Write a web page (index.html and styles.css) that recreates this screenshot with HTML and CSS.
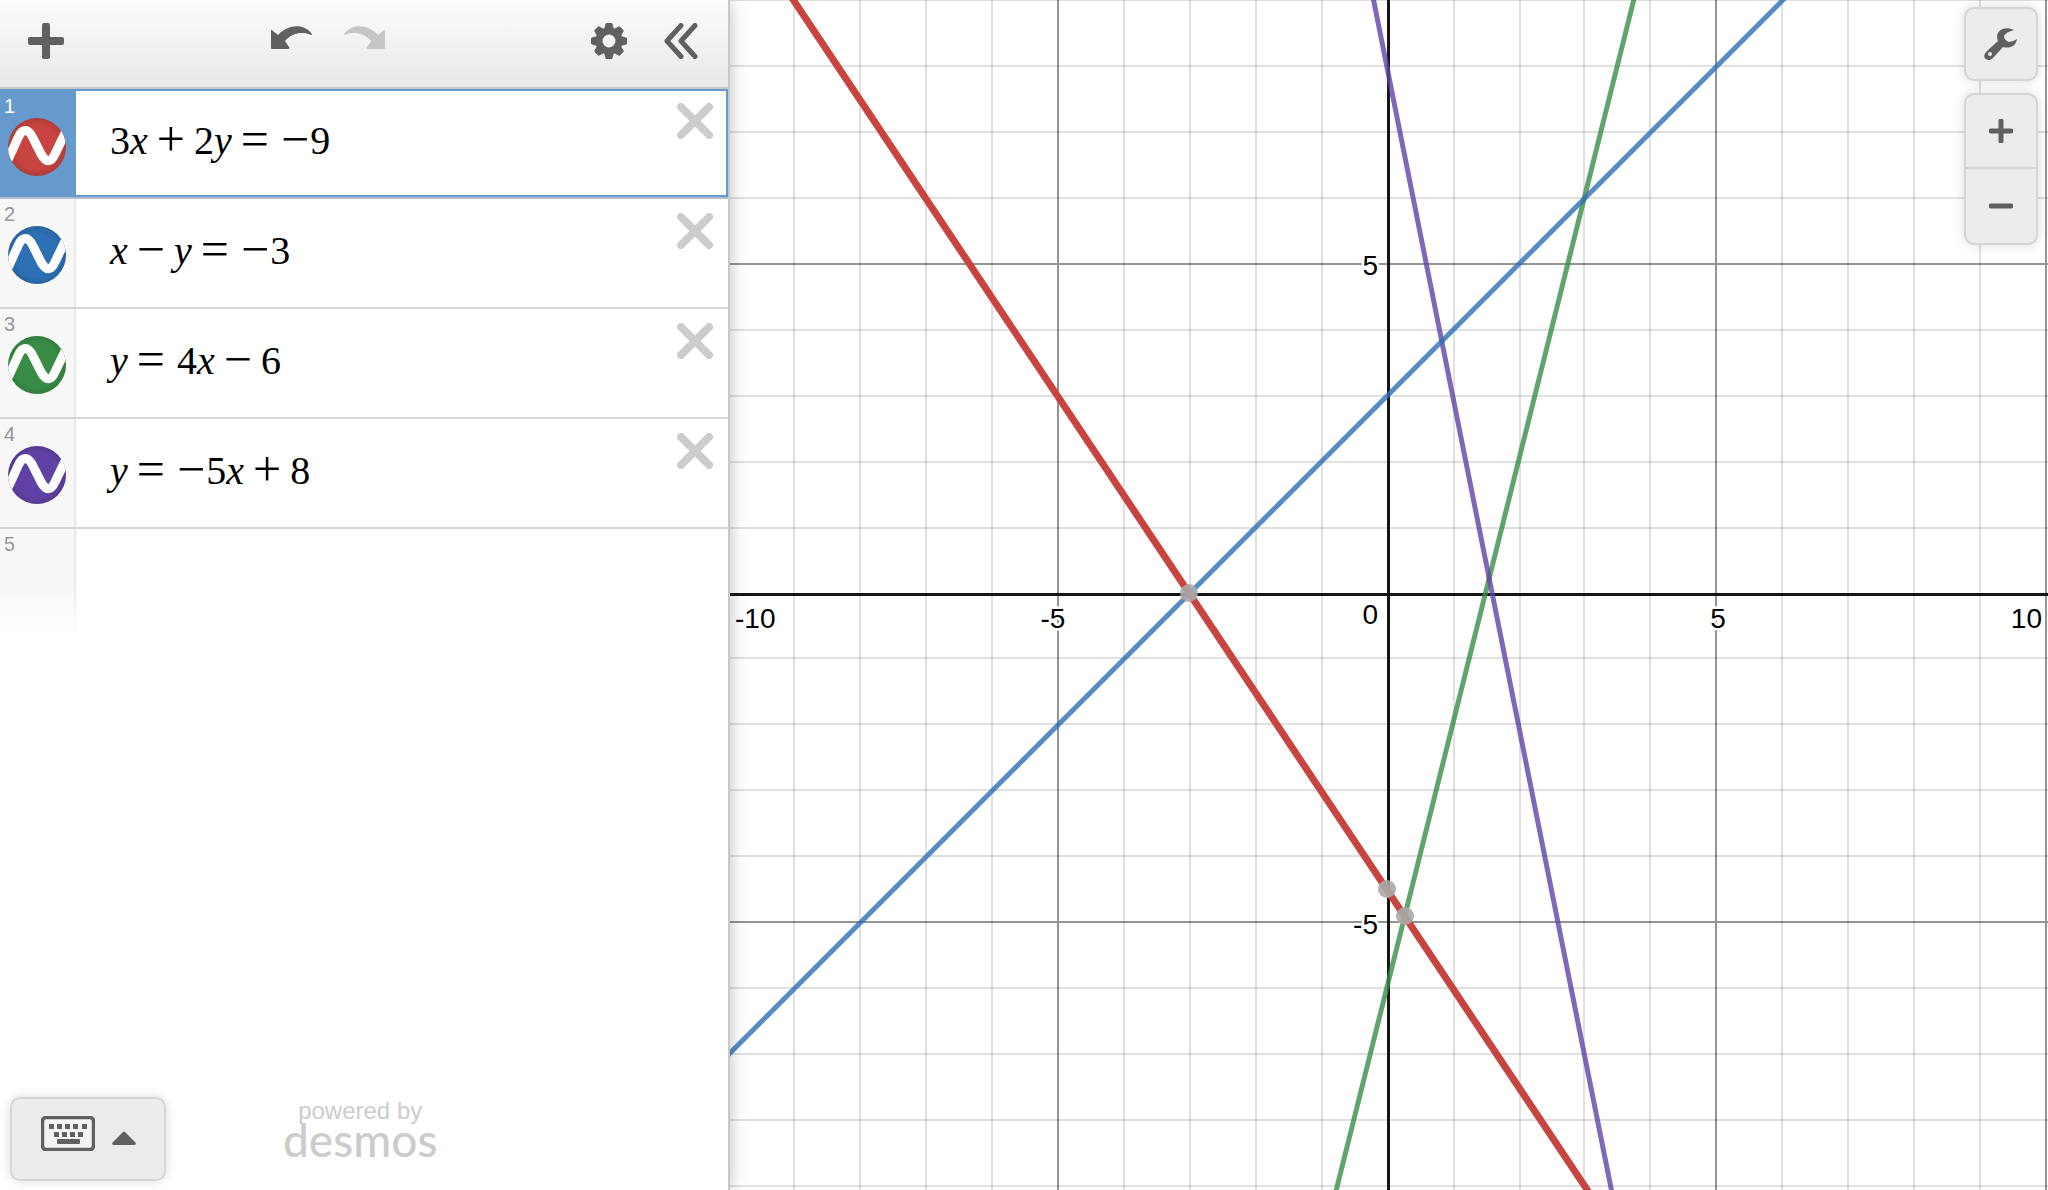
FILE: index.html
```html
<!DOCTYPE html>
<html lang="en">
<head>
<meta charset="utf-8">
<title>Desmos | Graphing Calculator</title>
<link rel="stylesheet" href="styles.css">
</head>
<body>
<svg class="defs" aria-hidden="true">
  <defs>
    <radialGradient id="shade">
      <stop offset="0.75" stop-color="#000" stop-opacity="0"/>
      <stop offset="1" stop-color="#000" stop-opacity="0.12"/>
    </radialGradient>
    <clipPath id="disc"><circle cx="29" cy="29" r="29"/></clipPath>
    <symbol id="curve" viewBox="0 0 58 58">
      <circle cx="29" cy="29" r="29" fill="currentColor"/>
      <circle cx="29" cy="29" r="29" fill="url(#shade)"/>
      <path clip-path="url(#disc)" d="M-2 46 L10 20 C14 10 20 10 25 20 L33 36 C38 45 43 45 47 36 L60 9" fill="none" stroke="#fff" stroke-width="9"/>
    </symbol>
    <symbol id="cross" viewBox="0 0 36 36">
      <path d="M4 4 L32 32 M32 4 L4 32" stroke="currentColor" stroke-width="8" stroke-linecap="round"/>
    </symbol>
    <symbol id="undo-arrow" viewBox="0 0 42 24">
      <path d="M0 4 Q1 4 2 5 L7 9 C17 -2 33 -3 41 8 Q41 9 40 9 C31 5 21 7 14 15 L18 21 Q19 23 17 23 L1 23 Q0 23 0 22 Z" fill="currentColor"/>
    </symbol>
  </defs>
</svg>

<main class="calculator">
  <section class="panel" aria-label="Expressions">
    <header class="toolbar">
      <button class="tool" aria-label="Add item">
        <svg width="36" height="36" viewBox="0 0 36 36"><path d="M14 2 Q14 0 16 0 H20 Q22 0 22 2 V14 H34 Q36 14 36 16 V20 Q36 22 34 22 H22 V34 Q22 36 20 36 H16 Q14 36 14 34 V22 H2 Q0 22 0 20 V16 Q0 14 2 14 H14 Z" fill="currentColor"/></svg>
      </button>
      <div class="history">
        <button class="tool" aria-label="Undo"><svg width="42" height="24"><use href="#undo-arrow"/></svg></button>
        <button class="tool redo" aria-label="Redo" disabled><svg width="42" height="24"><use href="#undo-arrow"/></svg></button>
      </div>
      <div class="options">
        <button class="tool" aria-label="Edit list">
          <svg width="36" height="36" viewBox="-18 -18 36 36">
            <g fill="currentColor">
              <path fill-rule="evenodd" d="M0 -13.500 A13.500 13.500 0 1 1 0 13.500 A13.500 13.500 0 1 1 0 -13.500 Z M0 -6.500 A6.500 6.500 0 1 0 0 6.500 A6.500 6.500 0 1 0 0 -6.500 Z"/>
              <path id="tooth" d="M-5 -11.500 L-3.500 -17 Q-3.300 -18 -2.300 -18 H2.300 Q3.300 -18 3.500 -17 L5 -11.500 Z"/>
              <use href="#tooth" transform="rotate(45)"/>
              <use href="#tooth" transform="rotate(90)"/>
              <use href="#tooth" transform="rotate(135)"/>
              <use href="#tooth" transform="rotate(180)"/>
              <use href="#tooth" transform="rotate(225)"/>
              <use href="#tooth" transform="rotate(270)"/>
              <use href="#tooth" transform="rotate(315)"/>
            </g>
          </svg>
        </button>
        <button class="tool" aria-label="Hide expression list">
          <svg width="34" height="36" viewBox="0 0 34 36"><path d="M17 2.500 L3 18 L17 33.500 M31 2.500 L17 18 L31 33.500" fill="none" stroke="currentColor" stroke-width="5" stroke-linecap="round" stroke-linejoin="round"/></svg>
        </button>
      </div>
    </header>

    <ol class="list">
      <li class="row selected">
        <div class="tab"><span class="index">1</span>
          <button class="swatch red" aria-label="Hide expression 1"><svg width="58" height="58"><use href="#curve"/></svg></button></div>
        <div class="math" role="textbox" contenteditable="true" aria-label="Expression 1" spellcheck="false">3<i>x</i><span class="op">+</span>2<i>y</i><span class="op eq">=</span><span class="neg">−</span>9</div>
        <button class="delete" aria-label="Delete expression 1"><svg width="36" height="36"><use href="#cross"/></svg></button>
      </li>
      <li class="row">
        <div class="tab"><span class="index">2</span>
          <button class="swatch blue" aria-label="Hide expression 2"><svg width="58" height="58"><use href="#curve"/></svg></button></div>
        <div class="math" role="textbox" contenteditable="true" aria-label="Expression 2" spellcheck="false"><i>x</i><span class="op">−</span><i>y</i><span class="op eq">=</span><span class="neg">−</span>3</div>
        <button class="delete" aria-label="Delete expression 2"><svg width="36" height="36"><use href="#cross"/></svg></button>
      </li>
      <li class="row">
        <div class="tab"><span class="index">3</span>
          <button class="swatch green" aria-label="Hide expression 3"><svg width="58" height="58"><use href="#curve"/></svg></button></div>
        <div class="math" role="textbox" contenteditable="true" aria-label="Expression 3" spellcheck="false"><i>y</i><span class="op eq">=</span>4<i>x</i><span class="op">−</span>6</div>
        <button class="delete" aria-label="Delete expression 3"><svg width="36" height="36"><use href="#cross"/></svg></button>
      </li>
      <li class="row">
        <div class="tab"><span class="index">4</span>
          <button class="swatch purple" aria-label="Hide expression 4"><svg width="58" height="58"><use href="#curve"/></svg></button></div>
        <div class="math" role="textbox" contenteditable="true" aria-label="Expression 4" spellcheck="false"><i>y</i><span class="op eq">=</span><span class="neg">−</span>5<i>x</i><span class="op">+</span>8</div>
        <button class="delete" aria-label="Delete expression 4"><svg width="36" height="36"><use href="#cross"/></svg></button>
      </li>
      <li class="row next">
        <div class="tab"><span class="index">5</span></div>
      </li>
    </ol>

    <footer class="footer">
      <button class="keypad" aria-label="Show keypad">
        <svg width="54" height="35" viewBox="0 0 54 35">
          <rect x="1.500" y="1.500" width="51" height="32" rx="3.500" fill="#f4f4f4" stroke="currentColor" stroke-width="3.500"/>
          <path d="M8 10.500 h5 m3 0 h5 m3 0 h5 m3 0 h5 m4 0 h5 M13 18.500 h5 m3 0 h5 m3 0 h5 m3 0 h5" stroke="currentColor" stroke-width="5"/>
          <rect x="16" y="23" width="23" height="5" rx="1" fill="currentColor"/>
        </svg>
        <svg width="24" height="14" viewBox="0 0 24 14"><path d="M11 1 Q12 0 13 1 L23 11 Q25 14 22 14 H2 Q-1 14 1 11 Z" fill="currentColor"/></svg>
      </button>
      <a class="brand" href="#"><span>powered by</span><strong>desmos</strong></a>
    </footer>
  </section>

  <section class="graph" aria-label="Graph">
    <svg class="paper" viewBox="-658 -594 1318 1190" preserveAspectRatio="xMidYMid slice">
      <path class="minor" d="M-594 -600V600M-528 -600V600M-462 -600V600M-396 -600V600M-264 -600V600M-198 -600V600M-132 -600V600M-66 -600V600M66 -600V600M132 -600V600M196 -600V600M262 -600V600M394 -600V600M460 -600V600M526 -600V600M592 -600V600"/>
      <path class="minor" d="M-658 -594H660M-658 -528H660M-658 -462H660M-658 -396H660M-658 -264H660M-658 -198H660M-658 -132H660M-658 -66H660M-658 64H660M-658 130H660M-658 196H660M-658 262H660M-658 394H660M-658 460H660M-658 526H660M-658 592H660"/>
      <path class="major" d="M-330 -600V600M328 -600V600M658 -600V600M-658 -330H660M-658 328H660"/>
      <path class="axis" d="M-658 0H660M0 -600V600"/>
      <g class="labels">
        <text x="-653" y="34">-10</text>
        <text class="mid" x="-335" y="34">-5</text>
        <text class="mid" x="330" y="34">5</text>
        <text class="end" x="654" y="34">10</text>
        <text class="end" x="-10" y="30">0</text>
        <text class="end" x="-10" y="-319">5</text>
        <text class="end" x="-10" y="340">-5</text>
      </g>
      <g class="plots" transform="translate(-1 -1)">
        <path class="plot green" d="M-66 658L263 -658"/>
        <path class="plot purple" d="M-66 -856L263 790"/>
        <path class="plot blue" d="M-724 527L527 -724"/>
        <path class="plot red current" d="M-659 -691L263 691"/>
        <g class="points">
          <circle cx="-198" cy="0" r="9"/>
          <circle cx="0" cy="296" r="9"/>
          <circle cx="18" cy="323" r="9"/>
        </g>
      </g>
    </svg>
    <div class="controls">
      <button class="control" aria-label="Graph settings">
        <svg width="34" height="34" viewBox="0 0 34 34">
          <path fill="currentColor" fill-rule="evenodd" d="M30 3 C22 -1 14 2 13 9 Q13 12 14 14 L3 24 C-1 28 0 31 2 32 C4 34 7 33 9 31 L19 20 C26 22 32 19 33 12 Q29 15 25 15 Q20 13 20 9 Q22 5 30 3 Z M6 25 A2 2 0 1 0 6 29 A2 2 0 1 0 6 25 Z"/>
        </svg>
      </button>
      <div class="zoom">
        <button aria-label="Zoom in"><svg width="24" height="24" viewBox="0 0 24 24"><path d="M2 12H22M12 2V22" stroke="currentColor" stroke-width="5" stroke-linecap="round"/></svg></button>
        <button aria-label="Zoom out"><svg width="24" height="24" viewBox="0 0 24 24"><path d="M2 12H22" stroke="currentColor" stroke-width="5" stroke-linecap="round"/></svg></button>
      </div>
    </div>
  </section>
</main>
</body>
</html>
```
FILE: styles.css
```css
* { box-sizing: border-box; }

body {
  margin: 0;
  font-family: "Liberation Sans", Arial, sans-serif;
  background: #fff;
}

button {
  margin: 0;
  padding: 0;
  border: 0;
  background: none;
  color: #606060;
  font: inherit;
}

svg { display: block; }

.defs { position: absolute; width: 0; height: 0; }

.calculator {
  display: flex;
  height: 100vh;
  overflow: hidden;
}

/* Expression panel */
.panel {
  z-index: 1;
  display: flex;
  flex: 0 0 730px;
  flex-direction: column;
  border-right: 2px solid #c8c8c8;
  background: #fff;
  box-shadow: 0 0 16px rgba(0, 0, 0, 0.25);
}

.toolbar {
  display: flex;
  align-items: center;
  justify-content: space-between;
  height: 89px;
  padding: 0 30px 5px 28px;
  border-bottom: 2px solid #c8c8c8;
  background: linear-gradient(#fcfcfc, #e8e8e8);
}

.history { display: flex; gap: 30px; padding-bottom: 6px; }
.options { display: flex; gap: 37px; }
.redo { color: #c6c6c6; transform: scaleX(-1); }

.list {
  flex: 1;
  margin: 0;
  padding: 0;
  list-style: none;
}

.row {
  display: flex;
  height: 110px;
  border-bottom: 2px solid #d6d6d6;
}

.tab {
  flex: 0 0 76px;
  padding: 4px 0 0 8px;
  border-right: 2px solid #e6e6e6;
  background: #f7f7f7;
}

.index {
  display: block;
  height: 23px;
  margin-left: -4px;
  color: #969696;
  font-size: 20px;
  line-height: 22px;
}

.swatch { display: block; border-radius: 50%; }
.red { color: #c74440; }
.blue { color: #2d70b3; }
.green { color: #388c46; }
.purple { color: #6042a6; }

.math {
  flex: 1;
  padding: 26px 0 0 34px;
  outline: 0;
  color: #000;
  font-family: "Liberation Serif", "Times New Roman", serif;
  font-size: 40px;
  line-height: 52px;
  white-space: nowrap;
}

.op, .neg {
  font-size: 50px;
  line-height: 0;
  vertical-align: -2px;
}
.op { margin: 0 9px; }
.eq { margin-right: 12px; }
.neg { margin-right: 1px; }

.delete {
  align-self: flex-start;
  margin: 14px 15px 0 0;
  color: #ccc;
}

.selected { border-color: #b4bed0; box-shadow: inset 0 0 0 2px #6699cc; }
.selected .tab { padding-top: 6px; border-color: #6699cc; background: #6699cc; }
.selected .index { color: #fff; }

.next { border: 0; }
.next .tab {
  -webkit-mask-image: linear-gradient(#000 45%, transparent 95%);
  mask-image: linear-gradient(#000 45%, transparent 95%);
}

.footer {
  display: flex;
  align-items: flex-end;
  gap: 117px;
  padding: 0 0 9px 10px;
}

.keypad {
  display: flex;
  align-items: center;
  gap: 17px;
  width: 156px;
  height: 84px;
  padding: 0 0 12px 29px;
  border: 2px solid #d5d5d5;
  border-radius: 10px;
  background: #ececec;
  box-shadow: 0 0 12px rgba(0, 0, 0, 0.14);
}
.keypad svg + svg { margin-top: 10px; }

.brand {
  display: flex;
  flex-direction: column;
  align-items: center;
  padding-bottom: 26px;
  color: #ccc;
  font-size: 24px;
  line-height: 28px;
  text-decoration: none;
}
.brand strong {
  font-family: Lato, sans-serif;
  font-size: 46px;
  font-weight: 500;
  line-height: 30px;
}

/* Graph paper */
.graph { position: relative; flex: 1; min-width: 0; }
.paper { width: 100%; height: 100%; }
.paper path { fill: none; }
.minor { stroke: #000; stroke-opacity: 0.12; stroke-width: 2; }
.major { stroke: #000; stroke-opacity: 0.42; stroke-width: 2; }
.axis { stroke: #161616; stroke-width: 3; shape-rendering: crispEdges; }

.labels {
  fill: #000;
  stroke: #fff;
  stroke-width: 5;
  stroke-linejoin: round;
  paint-order: stroke;
  font-size: 28px;
}
.mid { text-anchor: middle; }
.end { text-anchor: end; }

.plot { stroke: currentColor; stroke-width: 5; opacity: 0.8; }
.current { stroke-width: 7; opacity: 1; }
.points { fill: #aaa; fill-opacity: 0.9; }

.controls {
  position: absolute;
  top: 7px;
  right: 10px;
  display: flex;
  flex-direction: column;
  gap: 12px;
}

.control, .zoom {
  width: 74px;
  border: 2px solid #d5d5d5;
  border-radius: 10px;
  background: #ececec;
  box-shadow: 0 0 12px rgba(0, 0, 0, 0.14);
}
.control { display: grid; place-items: center; height: 74px; }
.zoom button { display: grid; place-items: center; width: 100%; height: 72px; }
.zoom button + button { height: 76px; border-top: 2px solid #d5d5d5; }
```
